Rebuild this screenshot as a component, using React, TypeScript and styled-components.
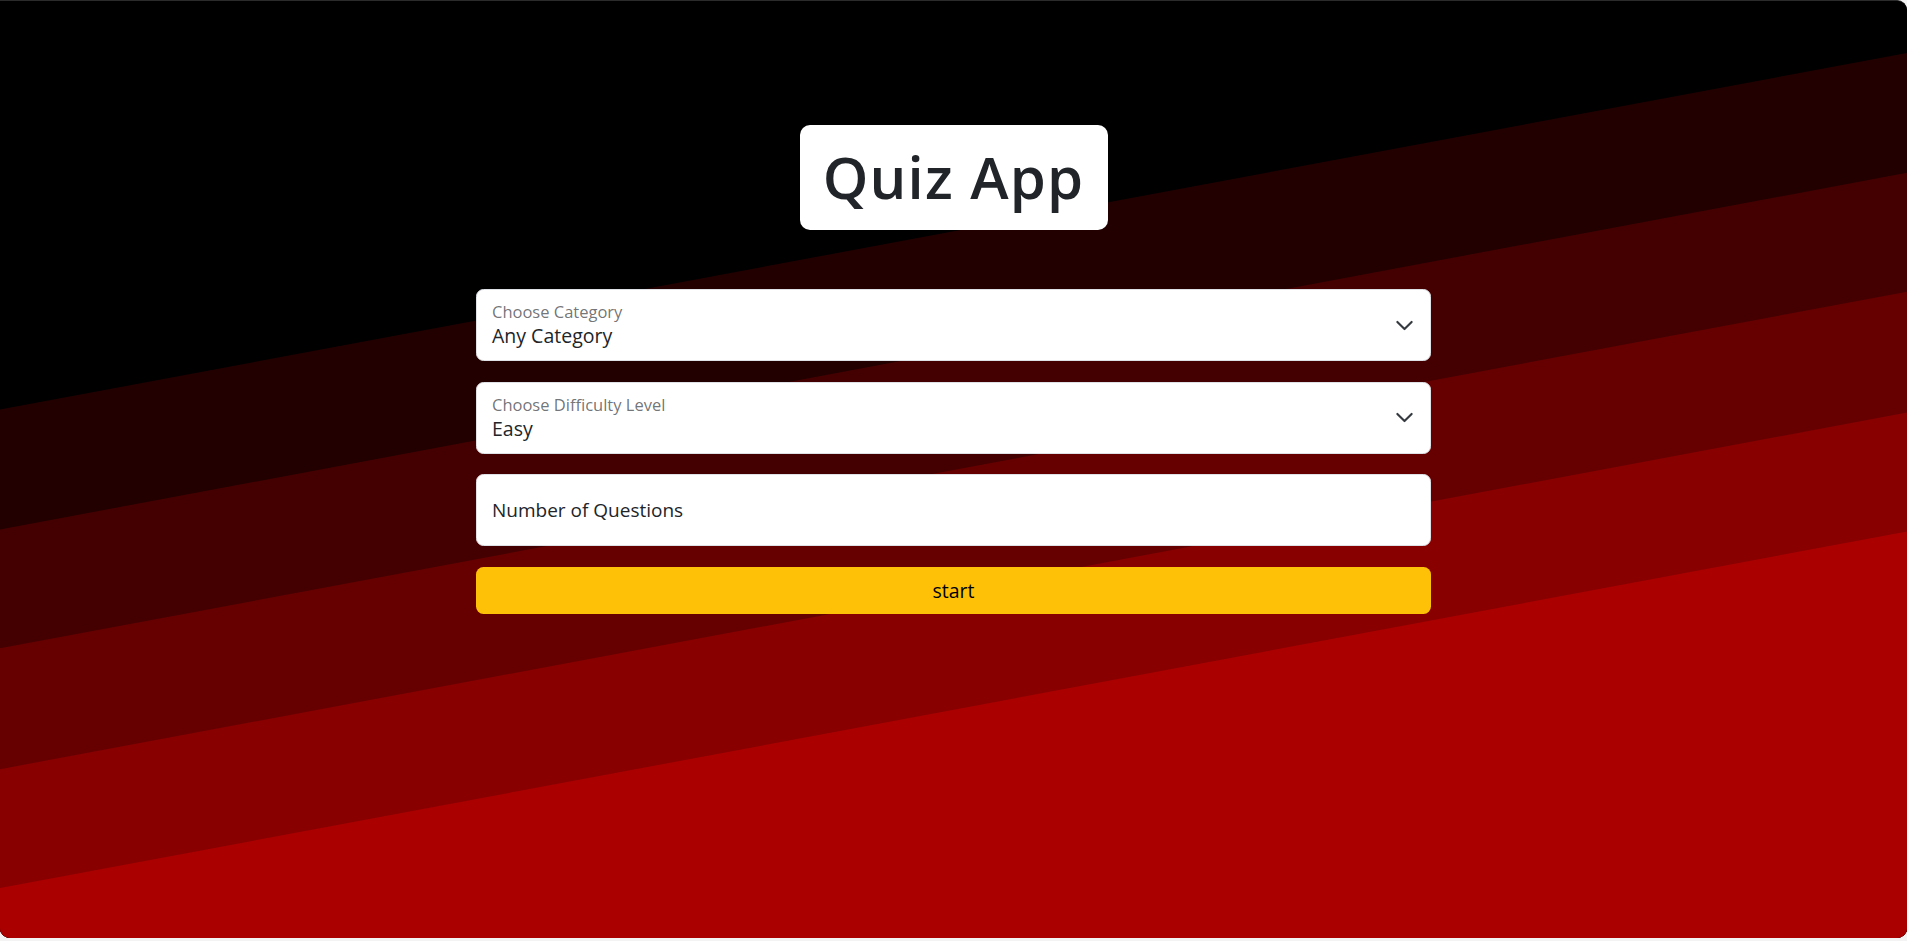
import React from "react";
import styled, { createGlobalStyle } from "styled-components";

const GlobalStyle = createGlobalStyle`
  html, body {
    margin: 0;
    padding: 0;
    background: #f3f3f3;
  }
  body {
    font-family: "Open Sans", "Noto Sans", "Liberation Sans", sans-serif;
    color: #212529;
  }
  * {
    box-sizing: border-box;
  }
`;

/** diagonal band edges: y at the left edge, each falls 357px across */
const BAND_EDGES = [409, 529, 648, 769, 888];
const BAND_COLORS = ["#220000", "#440000", "#660000", "#880000", "#aa0000"];
const PAGE_W = 1907;
const PAGE_H = 938;
const DROP = 357;

const Page = styled.div`
  position: relative;
  height: ${PAGE_H}px;
  overflow: hidden;
  background: #000;
  border-top: 1px solid #2b2b2b;
  border-radius: 0 10px 10px 10px;
`;

const Backdrop = styled.svg`
  position: absolute;
  inset: 0;
  width: 100%;
  height: 100%;
  display: block;
`;

const Content = styled.main`
  position: relative;
  display: flex;
  flex-direction: column;
  align-items: center;
  padding-top: 124px;
`;

const Title = styled.h1`
  margin: 0;
  width: 308px;
  padding: 18px 0 19px;
  background: #fff;
  border-radius: 10px;
  text-align: center;
  font-size: 58px;
  line-height: 68px;
  font-weight: 600;
  letter-spacing: 1.2px;
  color: #212529;
`;

const Form = styled.form`
  width: 955px;
  margin-top: 59px;
  display: flex;
  flex-direction: column;
  gap: 20.5px;
`;

const Field = styled.div`
  height: 72px;
  display: flex;
  align-items: center;
  justify-content: space-between;
  padding: 0 16px 0 15px;
  background: #fff;
  border: 1px solid #dee2e6;
  border-radius: 7.5px;
`;

const FieldText = styled.div`
  display: flex;
  flex-direction: column;
`;

const FieldLabel = styled.span`
  font-size: 16.5px;
  line-height: 22px;
  color: rgba(33, 37, 41, 0.65);
`;

const FieldValue = styled.span<{ $small?: boolean }>`
  font-size: ${(p) => (p.$small ? "19px" : "19.5px")};
  line-height: 26px;
  color: #212529;
`;

const Chevron = styled.svg`
  width: 19px;
  height: 19px;
  flex: none;
`;

const StartButton = styled.button`
  height: 47px;
  border: none;
  border-radius: 7.5px;
  background: #ffc107;
  color: #000;
  font-family: inherit;
  font-size: 19.5px;
  cursor: pointer;
`;

const ChevronIcon = () => (
  <Chevron viewBox="0 0 16 16">
    <path
      d="m2 5 6 6 6-6"
      fill="none"
      stroke="#343a40"
      strokeWidth="1.8"
      strokeLinecap="round"
      strokeLinejoin="round"
    />
  </Chevron>
);

interface SelectFieldProps {
  label: string;
  value: string;
}

const SelectField: React.FC<SelectFieldProps> = ({ label, value }) => (
  <Field>
    <FieldText>
      <FieldLabel>{label}</FieldLabel>
      <FieldValue>{value}</FieldValue>
    </FieldText>
    <ChevronIcon />
  </Field>
);

export default function App() {
  return (
    <>
      <GlobalStyle />
      <Page>
        <Backdrop
          viewBox={`0 0 ${PAGE_W} ${PAGE_H}`}
          preserveAspectRatio="none"
        >
          <rect width={PAGE_W} height={PAGE_H} fill="#000" />
          {BAND_EDGES.map((y, i) => (
            <polygon
              key={y}
              points={`0,${y} ${PAGE_W},${y - DROP} ${PAGE_W},${PAGE_H} 0,${PAGE_H}`}
              fill={BAND_COLORS[i]}
            />
          ))}
        </Backdrop>
        <Content>
          <Title>Quiz App</Title>
          <Form onSubmit={(e) => e.preventDefault()}>
            <SelectField label="Choose Category" value="Any Category" />
            <SelectField label="Choose Difficulty Level" value="Easy" />
            <Field>
              <FieldValue $small>Number of Questions</FieldValue>
            </Field>
            <StartButton type="submit">start</StartButton>
          </Form>
        </Content>
      </Page>
    </>
  );
}
